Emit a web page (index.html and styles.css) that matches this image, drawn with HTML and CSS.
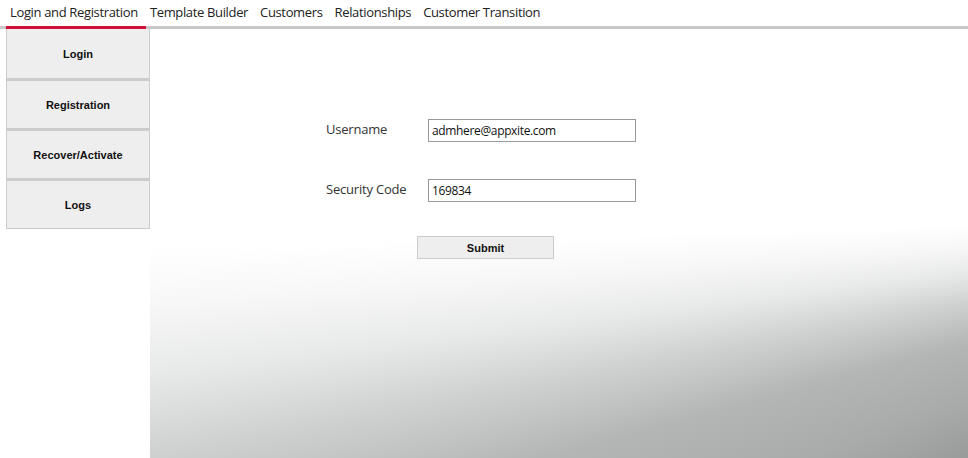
FILE: index.html
```html
<!DOCTYPE html>
<html lang="en">
<head>
  <meta charset="UTF-8">
  <title>Login and Registration</title>
  <meta name="viewport" content="width=device-width, initial-scale=1.0">
  <link rel="stylesheet" href="styles.css">
</head>
<body>
  <div class="tabs">
    <a class="tab active" href="#">Login and Registration</a>
    <a class="tab" href="#">Template Builder</a>
    <a class="tab" href="#">Customers</a>
    <a class="tab" href="#">Relationships</a>
    <a class="tab" href="#">Customer Transition</a>
  </div>

  <div class="page">
    <div class="sidebar">
      <button class="side-item">Login</button>
      <button class="side-item">Registration</button>
      <button class="side-item">Recover/Activate</button>
      <button class="side-item">Logs</button>
    </div>

    <div class="main">
      <form class="login-form" onsubmit="return false">
        <label for="username">Username</label>
        <input type="text" id="username" value="admhere@appxite.com">

        <label for="code">Security Code</label>
        <input type="text" id="code" value="169834">

        <button type="submit" class="submit">Submit</button>
      </form>
    </div>
  </div>
</body>
</html>
```

FILE: styles.css
```css
html, body {
  height: 100%;
}
body {
  margin: 0;
  background: #fff;
  color: #222;
  font-family: "Open Sans", "Noto Sans", sans-serif;
  display: flex;
  flex-direction: column;
}
.tabs {
  display: flex;
  align-items: flex-start;
  height: 26px;
  border-bottom: 3px solid #c8c8c8;
  padding-left: 6px;
}
.tab {
  font-size: 13px;
  letter-spacing: -0.35px;
  line-height: 24px;
  padding: 0 8px 0 4px;
  color: #222;
  text-decoration: none;
  border-bottom: 3px solid transparent;
  height: 29px;
  box-sizing: border-box;
}
.tab.active {
  border-bottom-color: #d0103a;
}
.page {
  flex: 1;
  display: flex;
}
.sidebar {
  margin-left: 6px;
  width: 144px;
  align-self: flex-start;
  display: flex;
  flex-direction: column;
}
.side-item {
  height: 50px;
  background: #eee;
  border: 1px solid #ccc;
  border-top: 2px solid #ccc;
  font-family: "Liberation Sans", Arial, sans-serif;
  font-weight: bold;
  font-size: 11px;
  color: #111;
  padding-top: 2px;
}
.side-item:first-child {
  border-top: none;
}
/* soft grey light falling in from the right */
.main {
  flex: 1;
  background: conic-gradient(from 0deg at 159% 43%,
    #999b9a 243deg, #a9abaa 249deg, #b4b6b5 255deg,
    #cfd1d0 259.5deg, #e8e9e9 263deg, #f7f7f7 266deg, #fff 268.5deg);
}
.login-form {
  display: grid;
  grid-template-columns: 102px 208px;
  row-gap: 37px;
  align-items: center;
  padding: 90px 0 0 176px;
  font-size: 13px;
}
.login-form label {
  color: #333;
  letter-spacing: -0.2px;
  margin-bottom: 4px;
}
.login-form input {
  height: 23px;
  box-sizing: border-box;
  border: 1px solid #999;
  padding: 0 3px;
  font-family: "Open Sans", "Noto Sans", sans-serif;
  font-size: 12px;
  letter-spacing: -0.35px;
  color: #111;
}
.submit {
  grid-column: 1 / 3;
  justify-self: start;
  margin: -3px 0 0 91px;
  width: 137px;
  height: 23px;
  background: #eee;
  border: 1px solid #ccc;
  font-family: "Liberation Sans", Arial, sans-serif;
  font-weight: bold;
  font-size: 11px;
  color: #111;
}
```
